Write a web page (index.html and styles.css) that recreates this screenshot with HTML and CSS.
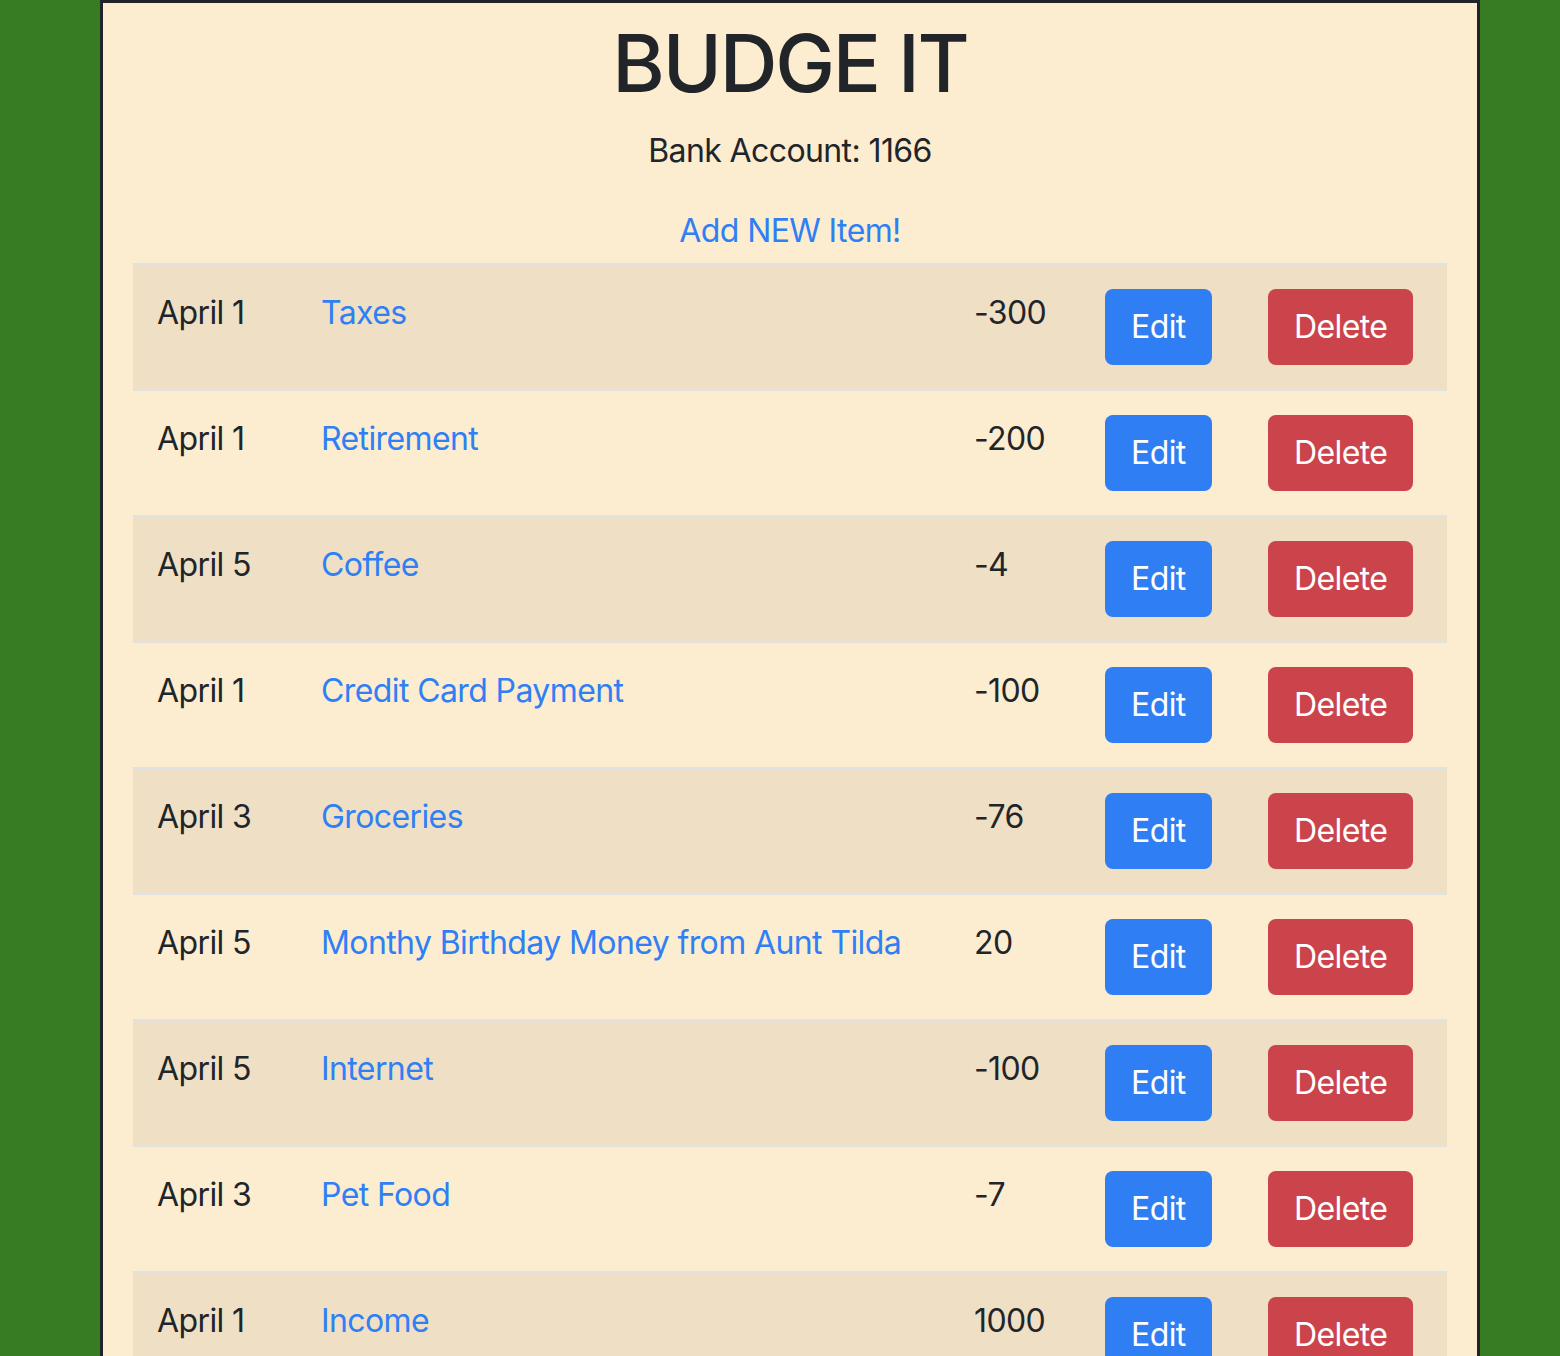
FILE: index.html
```html
<!DOCTYPE html>
<html>
<head>
<meta charset="utf-8">
<title>Budge It</title>
<link rel="stylesheet" href="styles.css">
</head>
<body>
<div class="page">
  <h1 class="title">BUDGE IT</h1>
  <p class="balance">Bank Account: 1166</p>
  <a class="add-link" href="#">Add NEW Item!</a>
  <table class="items">
    <colgroup>
      <col class="c-date"><col class="c-name"><col class="c-amt"><col class="c-edit"><col class="c-del">
    </colgroup>
    <tbody>
      <tr><td>April 1</td><td><a href="#">Taxes</a></td><td>-300</td><td><button class="btn btn-edit">Edit</button></td><td><button class="btn btn-del">Delete</button></td></tr>
      <tr><td>April 1</td><td><a href="#">Retirement</a></td><td>-200</td><td><button class="btn btn-edit">Edit</button></td><td><button class="btn btn-del">Delete</button></td></tr>
      <tr><td>April 5</td><td><a href="#">Coffee</a></td><td>-4</td><td><button class="btn btn-edit">Edit</button></td><td><button class="btn btn-del">Delete</button></td></tr>
      <tr><td>April 1</td><td><a href="#">Credit Card Payment</a></td><td>-100</td><td><button class="btn btn-edit">Edit</button></td><td><button class="btn btn-del">Delete</button></td></tr>
      <tr><td>April 3</td><td><a href="#">Groceries</a></td><td>-76</td><td><button class="btn btn-edit">Edit</button></td><td><button class="btn btn-del">Delete</button></td></tr>
      <tr><td>April 5</td><td><a href="#">Monthy Birthday Money from Aunt Tilda</a></td><td>20</td><td><button class="btn btn-edit">Edit</button></td><td><button class="btn btn-del">Delete</button></td></tr>
      <tr><td>April 5</td><td><a href="#">Internet</a></td><td>-100</td><td><button class="btn btn-edit">Edit</button></td><td><button class="btn btn-del">Delete</button></td></tr>
      <tr><td>April 3</td><td><a href="#">Pet Food</a></td><td>-7</td><td><button class="btn btn-edit">Edit</button></td><td><button class="btn btn-del">Delete</button></td></tr>
      <tr><td>April 1</td><td><a href="#">Income</a></td><td>1000</td><td><button class="btn btn-edit">Edit</button></td><td><button class="btn btn-del">Delete</button></td></tr>
    </tbody>
  </table>
</div>
</body>
</html>
```

FILE: styles.css
```css
html, body {
  margin: 0;
  padding: 0;
}
body {
  background: #377c23;
  font-family: Inter, "Liberation Sans", sans-serif;
  font-size: 32px;
  line-height: 1.5;
  letter-spacing: -0.6px;
  color: #212529;
}
.page {
  box-sizing: border-box;
  width: 1380px;
  margin: 0 0 0 100px;
  background: #fcecd0;
  border: 3px solid #212529;
  border-bottom: none;
  padding: 0 30px 40px;
  text-align: center;
}
.title {
  margin: 0;
  padding-top: 12px;
  font-size: 80px;
  font-weight: 500;
  line-height: 1.2;
  letter-spacing: -2.2px;
}
.balance {
  margin: 16px 0 0;
}
.add-link {
  display: inline-block;
  margin-top: 32px;
  color: #2f7ff5;
  text-decoration: none;
}
.items {
  width: 100%;
  margin-top: 8px;
  border-collapse: collapse;
  text-align: left;
  table-layout: fixed;
}
.c-date { width: 164px; }
.c-name { width: 653px; }
.c-amt { width: 131px; }
.c-edit { width: 163px; }
.c-del { width: 203px; }
.items td {
  padding: 24px;
  vertical-align: top;
  border-top: 2px solid #dfe1e3;
}
.items tr:nth-child(odd) td {
  background: #efdfc4;
}
.items a {
  color: #2f7ff5;
  text-decoration: none;
}
.btn {
  font-family: inherit;
  font-size: 32px;
  line-height: 48px;
  letter-spacing: -0.6px;
  padding: 12px 24px;
  border: 2px solid transparent;
  border-radius: 8px;
  color: #fff;
  cursor: pointer;
}
.btn-edit {
  background: #2f7ef4;
}
.btn-del {
  background: #cb444b;
}
```
